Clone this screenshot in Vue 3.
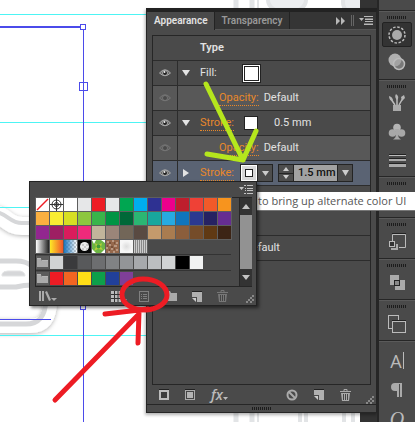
<script setup>
import { ref } from 'vue'

const weight = ref('1.5 mm')

const swatchRows = [
  ['none', 'registration', '#ffffff', '#e6e7e8', '#ed1c24', '#e6e7e8', '#00a651', '#00aeef', '#2e3192', '#ec008c', '#be1e2d', '#ef4136', '#f15a29', '#f7941e'],
  ['#fbb040', '#f9ed32', '#d7df23', '#8dc63f', '#39b54a', '#009444', '#006838', '#2bb673', '#18a79d', '#27aae1', '#1075bc', '#2b3990', '#262262', '#662d91'],
  ['#92278f', '#9e1f63', '#da1c5c', '#ee2a7b', '#c2b59b', '#9b8579', '#726658', '#594a42', '#c49a6c', '#a97c50', '#8b5e3c', '#754c29', '#603913', '#3c2415'],
  ['gray-fade', 'sun', 'sky', 'spot', 'leaf', 'bark', 'frost', 'lines']
]
const groups = [
  ['#d1d3d4', '#3a3a3c', '#58595b', '#6d6e70', '#808284', '#939598', '#a7a9ac', '#bcbec0', '#d1d3d4', '#000000', '#f1f2f2'],
  ['#ed1c24', '#f26522', '#ffde17', '#0e9f4a', '#21409a', '#7f3f98']
]
const isColor = (s) => s.startsWith('#')
</script>

<template>
  <main class="workspace">
    <svg class="artboard" width="415" height="422" viewBox="0 0 415 422" aria-hidden="true">
      <defs>
        <filter id="soft" x="-20%" y="-20%" width="140%" height="140%">
          <feDropShadow dx="0" dy="1" stdDeviation="2" flood-color="#000" flood-opacity="0.3" />
        </filter>
      </defs>
      <g fill="none" filter="url(#soft)">
        <path d="M-6 214 C6 216 8 226 22 226 H60" stroke="#fff" stroke-width="18" />
        <path d="M-6 326 H30 C44 326 50 318 50 300 V262" stroke="#fff" stroke-width="14" />
      </g>
      <g fill="none" stroke="#d6d7d9" stroke-width="4">
        <path d="M-4 212 C8 214 10 223 22 223 H40" />
        <path d="M-4 261 H16 Q26 261 32 266" stroke-width="5" />
        <path d="M-4 287 H16 Q24 285 32 285" stroke-width="5" />
        <path d="M-4 324 H26 C38 324 45 318 46 300" stroke-width="5" />
        <path d="M2 276 V274 Q3 271 8 271 H20 Q25 272 25 276Z" fill="#d6d7d9" stroke="#e3e4e5" stroke-width="1" />
      </g>
      <g fill="none" stroke="#e2e4e6">
        <path d="M236 0V422M252 0V422" stroke-width="5" />
        <path d="M258 0V422" stroke-width="2" />
        <ellipse cx="287" cy="0" rx="19" ry="13" fill="#eceef0" stroke-width="4" />
        <ellipse cx="356" cy="2" rx="13" ry="13" fill="#eceef0" stroke-width="4" />
        <path d="M272 410H300V424M306 410V424M344 410V424M353 410V424" stroke-width="4" />
      </g>
      <g stroke="#4df4f4" stroke-width="1">
        <path d="M0 14.500H146M0 122.500H146M0 207.500H30M0 335.500H146" />
      </g>
      <g stroke="#4b4bea" fill="none">
        <path d="M0 27H81" stroke-width="2" />
        <path d="M83.500 27V422M0 319.500H51" />
        <rect x="80.500" y="24.500" width="5" height="5" fill="#fff" />
        <rect x="79.500" y="82.500" width="8" height="8" />
        <rect x="80.500" y="304.500" width="5" height="5" fill="#fff" />
      </g>
    </svg>
    <div class="canvas-scroll"></div>

    <section class="panel" aria-label="Appearance panel">
      <header class="tabs">
        <button class="tab active">Appearance</button>
        <button class="tab">Transparency</button>
        <span class="tab-tools">
          <button class="bare" aria-label="Collapse"><svg width="10" height="8"><path d="M0 0L4 4L0 8ZM5 0L9 4L5 8Z" fill="#b8b8b8" /></svg></button>
          <i class="split"></i>
          <button class="bare" aria-label="Panel menu"><svg width="14" height="9"><path d="M0 2H5L2.500 5ZM5 0H14V1H5ZM6 2.500H14V4H6ZM6 5H14V6H6ZM5 7.500H14V9H5Z" fill="#b8b8b8" /></svg></button>
        </span>
      </header>

      <div class="list">
        <div class="row head"><span class="eye-cell"></span><span class="cell">Type</span></div>

        <div class="row">
          <button class="eye-cell" aria-label="Toggle fill"><svg class="eye" viewBox="0 0 12 8"><path d="M0.500 4Q6 -2.500 11.500 4Q6 9.500 0.500 4Z" fill="#6a6a6a" stroke="#aaa" /><circle cx="6" cy="4" r="2.500" fill="#222" stroke="#ccc" stroke-width=".7" /><circle cx="5.500" cy="3" r="1" fill="#eee" /></svg></button>
          <button class="twist" aria-label="Collapse fill"><svg width="8" height="6"><path d="M0 0H8L4 6Z" fill="#e4e4e4" /></svg></button>
          <span class="label">Fill:</span>
          <button class="fill-chip" aria-label="Fill color"></button>
        </div>

        <div class="row sub">
          <button class="eye-cell" aria-label="Toggle opacity"><svg class="eye dim" viewBox="0 0 12 8"><path d="M0.500 4Q6 -2.500 11.500 4Q6 9.500 0.500 4Z" fill="#6a6a6a" stroke="#aaa" /><circle cx="6" cy="4" r="2.500" fill="#333" stroke="#ccc" stroke-width=".7" /></svg></button>
          <button class="link nested">Opacity:</button><span class="value">Default</span>
        </div>

        <div class="row">
          <button class="eye-cell" aria-label="Toggle stroke"><svg class="eye" viewBox="0 0 12 8"><path d="M0.500 4Q6 -2.500 11.500 4Q6 9.500 0.500 4Z" fill="#6a6a6a" stroke="#aaa" /><circle cx="6" cy="4" r="2.500" fill="#222" stroke="#ccc" stroke-width=".7" /><circle cx="5.500" cy="3" r="1" fill="#eee" /></svg></button>
          <button class="twist" aria-label="Collapse stroke"><svg width="8" height="6"><path d="M0 0H8L4 6Z" fill="#e4e4e4" /></svg></button>
          <span class="label"><button class="link">Stroke:</button></span>
          <button class="stroke-chip" aria-label="Stroke color"></button>
          <span>0.5 mm</span>
        </div>

        <div class="row sub">
          <button class="eye-cell" aria-label="Toggle stroke opacity"><svg class="eye dim" viewBox="0 0 12 8"><path d="M0.500 4Q6 -2.500 11.500 4Q6 9.500 0.500 4Z" fill="#6a6a6a" stroke="#aaa" /><circle cx="6" cy="4" r="2.500" fill="#333" stroke="#ccc" stroke-width=".7" /></svg></button>
          <button class="link nested">Opacity:</button><span class="value">Default</span>
        </div>

        <div class="row selected">
          <button class="eye-cell" aria-label="Toggle selected stroke"><svg class="eye" viewBox="0 0 12 8"><path d="M0.500 4Q6 -2.500 11.500 4Q6 9.500 0.500 4Z" fill="#6a6a6a" stroke="#aaa" /><circle cx="6" cy="4" r="2.500" fill="#222" stroke="#ccc" stroke-width=".7" /><circle cx="5.500" cy="3" r="1" fill="#eee" /></svg></button>
          <button class="twist" aria-label="Expand stroke"><svg width="6" height="8"><path d="M0 0V8L6 4Z" fill="#e4e4e4" /></svg></button>
          <span class="label short"><button class="link">Stroke:</button></span>
          <span class="combo">
            <button class="picker" aria-label="Selected stroke color"><i></i></button>
            <button class="drop" aria-label="Open swatches"><svg width="7" height="5"><path d="M0 0H7L3.500 5Z" fill="#ccc" /></svg></button>
          </span>
          <span class="combo weight">
            <span class="steps">
              <button aria-label="Increase"><svg width="6" height="4"><path d="M0 4H6L3 0Z" fill="#ccc" /></svg></button>
              <button aria-label="Decrease"><svg width="6" height="4"><path d="M0 0H6L3 4Z" fill="#ccc" /></svg></button>
            </span>
            <input v-model="weight" aria-label="Stroke weight" />
            <button class="drop" aria-label="Weight presets"><svg width="7" height="6"><path d="M0 0H7L3.500 6Z" fill="#ccc" /></svg></button>
          </span>
        </div>

        <div class="row"><span class="eye-cell"></span></div>
        <div class="row"><span class="eye-cell"></span></div>
        <div class="row"><span class="eye-cell"></span><span class="cell"><button class="link">Opacity:</button><span class="value">Default</span></span></div>
      </div>

      <footer class="tools">
        <button class="bare" aria-label="Add new stroke"><svg width="10" height="11"><rect x="1" y="2" width="8" height="8" fill="#3c3c3c" stroke="#bcbcbc" stroke-width="2" /><path d="M0 .5H10" stroke="#222" /></svg></button>
        <button class="bare" aria-label="Add new fill"><svg width="10" height="11"><rect x=".5" y="1.500" width="9" height="9" fill="#444" stroke="#aaa" /><rect x="2" y="3" width="6" height="6" fill="#b4b4b4" /><path d="M0 .5H10" stroke="#222" /></svg></button>
        <button class="bare fx" aria-label="Add effect"><em>fx</em><svg width="5" height="6"><path d="M0 0H5L2.500 3Z" fill="#bbb" /></svg></button>
        <span class="spacer"></span>
        <button class="bare" aria-label="Clear appearance"><svg width="12" height="12"><circle cx="6" cy="6" r="4.500" fill="none" stroke="#aaa" stroke-width="2" /><path d="M3 3L9 9" stroke="#aaa" stroke-width="2" /></svg></button>
        <button class="bare" aria-label="Duplicate item"><svg width="10" height="11"><path d="M0 1H10V11H5V6H0Z" fill="#b0b0b0" /><path d="M0 7H4V11Z" fill="#ccc" /><path d="M0 .5H10" stroke="#222" /></svg></button>
        <button class="bare" aria-label="Delete item"><svg width="11" height="12"><path d="M0 2.500H11M4 2V.5H7V2" stroke="#aaa" fill="none" /><path d="M1 4H10L9 12H2Z" fill="#aaa" /><path d="M3.500 5V11M5.500 5V11M7.500 5V11" stroke="#444" /></svg></button>
        <i class="corner"></i>
      </footer>
      <div class="bottom-grip"><i class="grip"></i></div>
    </section>

    <nav class="dock" aria-label="Panels">
      <div class="group start"></div>
      <div class="group two">
        <i class="grip"></i>
        <button class="tool on" aria-label="Appearance"><svg width="20" height="20" viewBox="0 0 20 20"><circle cx="10" cy="10" r="8" fill="none" stroke="#bbb" stroke-width="1.500" stroke-dasharray="2.500 1.690" /><circle cx="10" cy="10" r="5" fill="#aaa" /></svg></button>
        <button class="tool" aria-label="Transparency"><svg width="20" height="20" viewBox="0 0 20 20"><circle cx="8" cy="8" r="6.500" fill="#b0b0b0" /><circle cx="12" cy="12" r="5.500" fill="#999" fill-opacity=".6" stroke="#bbb" stroke-width="1.500" /></svg></button>
      </div>
      <div class="group three">
        <i class="grip"></i>
        <button class="tool" aria-label="Brushes"><svg width="20" height="20" viewBox="0 0 20 20"><path d="M6 12H14V18H6Z" fill="#aaa" /><path d="M8 12L4 6M10 12V5M12 12L16 5" stroke="#bbb" stroke-width="1.500" /><path d="M2 3Q6 4 6 8Q2 8 2 3ZM9 1Q13 4 10 7Q7 4 9 1ZM14 4L17 2L18 5L15 8Z" fill="#b5b5b5" /></svg></button>
        <button class="tool" aria-label="Symbols"><svg width="20" height="20" viewBox="0 0 20 20"><circle cx="10" cy="5.500" r="3.800" fill="#b4b4b4" /><circle cx="5.500" cy="11" r="3.800" fill="#a8a8a8" /><circle cx="14.500" cy="11" r="3.800" fill="#a8a8a8" /><path d="M8 7H12L11 12Q11 16 14 17.500H6Q9 16 9 12Z" fill="#a8a8a8" /></svg></button>
        <button class="tool" aria-label="Stroke"><svg width="20" height="20" viewBox="0 0 20 20"><path d="M2 4.500H19" stroke="#bbb" /><path d="M2 9H19" stroke="#aaa" stroke-width="2" /><path d="M2 14.500H19" stroke="#aaa" stroke-width="3" /><path d="M2 3.500H19M2 7.500H19M2 12.500H19" stroke="#222" /></svg></button>
      </div>
      <div class="group one"><i class="grip"></i></div>
      <div class="group one"><i class="grip"></i>
        <button class="tool" aria-label="Transform"><svg width="20" height="20" viewBox="0 0 20 20"><path d="M5.500 9V2.500H18.500V15.500H12" fill="none" stroke="#bbb" /><path d="M5 1.500H19" stroke="#222" /><rect x="2.500" y="9.500" width="5" height="5" fill="#333" stroke="#bbb" /><path d="M9 12H11V18H4V16H9Z" fill="#aaa" /></svg></button></div>
      <div class="group one"><i class="grip"></i>
        <button class="tool" aria-label="Pathfinder"><svg width="20" height="20" viewBox="0 0 20 20"><path d="M3 2H12V7H18V17H8V12H3Z" fill="#aaa" /><rect x="7.500" y="7.500" width="5" height="5" fill="#888" stroke="#222" /></svg></button></div>
      <div class="group one"><i class="grip"></i>
        <button class="tool" aria-label="Layers"><svg width="20" height="20" viewBox="0 0 20 20"><rect x="1.500" y="1.500" width="10" height="13" fill="none" stroke="#bbb" /><rect x="5.500" y="7.500" width="13" height="11" fill="#4a4a4a" stroke="#bbb" /><path d="M5 6.500H19" stroke="#222" /></svg></button></div>
      <div class="group last"><i class="grip"></i>
        <button class="tool glyph" aria-label="Character">A<i class="caret"></i></button>
        <button class="tool" aria-label="Paragraph"><svg width="20" height="20" viewBox="0 0 20 20"><path d="M14 3H8A4 4 0 0 0 8 11H10V17H12V4H13V17H15V3Z" fill="#aaa" /></svg></button>
        <button class="tool open" aria-label="OpenType"><em>O</em></button>
      </div>
    </nav>

    <div class="tooltip" role="tooltip">to bring up alternate color UI</div>

    <section class="swatches" aria-label="Swatches">
      <header class="sw-head">
        <button class="bare" aria-label="Swatches menu"><svg width="14" height="9"><path d="M0 2H5L2.500 5ZM5 0H7V1H5ZM8 0H14V1H8ZM6 3H7V4H6ZM8 3H14V4H8ZM6 5H7V6H6ZM8 5H14V6H8ZM5 8H7V9H5ZM8 8H14V9H8Z" fill="#c4c4c4" /></svg></button>
      </header>
      <div class="sw-body">
        <div class="sw-list">
          <div v-for="(row, r) in swatchRows" :key="r" class="sw-row">
            <button v-for="(s, i) in row" :key="i" class="sw" :class="isColor(s) ? '' : s" :style="isColor(s) ? { background: s } : null" :aria-label="s">
              <svg v-if="s === 'none'" viewBox="0 0 13 13"><path d="M1 12L12 1" stroke="#ed1c24" stroke-width="1.500" /></svg>
              <svg v-else-if="s === 'registration'" viewBox="0 0 13 13"><g fill="none" stroke="#333"><circle cx="6.500" cy="6.500" r="4.500" /><circle cx="6.500" cy="6.500" r="2" /><path d="M6.500 0V13M0 6.500H13" /></g></svg>
              <svg v-else-if="s === 'spot'" viewBox="0 0 13 13"><circle cx="6.500" cy="6.500" r="4.500" fill="#eee" /><path d="M4 4H6V6H4ZM8 4H10V6H8ZM6 6H8V8H6ZM4 8H6V10H4ZM8 8H10V10H8Z" fill="#ccc" /></svg>
              <svg v-else-if="s === 'leaf'" viewBox="0 0 13 13"><path d="M0 0H4L2 4ZM9 0H13V3ZM0 9L4 13H0ZM13 9V13H9Z" fill="#fff" /><path d="M3 3L6 5L10 3L9 7L11 10L6 9L2 11L4 7Z" fill="#b4cf3a" /><circle cx="6.500" cy="6.500" r="2" fill="#3f9b3a" /></svg>
              <svg v-else-if="s === 'bark'" viewBox="0 0 13 13"><path d="M1 2H3M6 1H8M10 3H12M3 5H5M8 6H11M0 8H2M5 9H7M10 10H12M2 12H4M7 12H9" stroke="#dcc6b6" /><path d="M3 3H5M8 3H9M1 6H2M5 7H7M8 9H9M3 10H4" stroke="#5d3a28" /></svg>
            </button>
          </div>
          <div v-for="(g, n) in groups" :key="'g' + n" class="sw-row group-row">
            <button class="sw folder" aria-label="Color group"><svg viewBox="0 0 13 13"><path d="M1 3H5L6 5H12V11H1Z" fill="#aaa" /><path d="M1 2.500H5M6 4.500H12" stroke="#ddd" stroke-width=".7" /></svg></button>
            <button v-for="(s, i) in g" :key="i" class="sw" :style="{ background: s }" :aria-label="s"></button>
          </div>
        </div>
        <div class="scroll">
          <button aria-label="Scroll up"><svg width="8" height="5"><path d="M0 5H8L4 0Z" fill="#c4c4c4" /></svg></button>
          <i></i>
          <button aria-label="Scroll down"><svg width="8" height="5"><path d="M0 0H8L4 5Z" fill="#c4c4c4" /></svg></button>
        </div>
      </div>
      <footer class="sw-tools">
        <button class="bare" aria-label="Swatch libraries"><svg width="18" height="12"><path d="M0 1H2V11H0ZM3 1H5V11H3ZM6 2L8 1L12 10L10 11Z" fill="#aaa" /><path d="M12 8H18L15 11Z" fill="#aaa" /></svg></button>
        <button class="bare kinds" aria-label="Show swatch kinds"><svg width="16" height="11"><path d="M0 0H10V11H0Z" fill="#bbb" /><path d="M3.500 0V11M7 0V11M0 3.500H10M0 7.500H10" stroke="#333" /><path d="M12 8H16L14 10Z" fill="#aaa" /></svg></button>
        <button class="bare" aria-label="Swatch options"><svg width="10" height="11"><rect x=".5" y=".5" width="9" height="10" fill="none" stroke="#808080" /><path d="M2 3.500H3M4 3.500H8M2 5.500H3M4 5.500H8M2 7.500H3M4 7.500H8" stroke="#808080" /></svg></button>
        <button class="bare group-btn" aria-label="New color group"><svg width="12" height="10"><path d="M0 0H4L5 2H11V10H0Z" fill="#aaa" /></svg></button>
        <button class="bare new-btn" aria-label="New swatch"><svg width="10" height="11"><path d="M0 1H10V11H5V6H0Z" fill="#b0b0b0" /><path d="M0 7H4V11Z" fill="#ccc" /><path d="M0 .5H10" stroke="#222" /></svg></button>
        <button class="bare trash-btn" aria-label="Delete swatch"><svg width="11" height="12"><path d="M0 2.500H11M4 2V.5H7V2" stroke="#777" fill="none" /><path d="M1 4H10L9 12H2Z" fill="#777" /><path d="M3.500 5V11M5.500 5V11M7.500 5V11" stroke="#444" /></svg></button>
        <i class="corner"></i>
      </footer>
    </section>

    <svg class="marks" width="415" height="422" viewBox="0 0 415 422" aria-hidden="true">
      <g fill="none" stroke-linecap="round" stroke-linejoin="round">
        <path d="M206 84L243 160M207 154L243 160L256 131" stroke="#b5e61d" stroke-width="5" />
        <path d="M55 400L138 315M105 314L148 309M139 312L138 343" stroke="#ed1c24" stroke-width="5" />
        <path d="M122 296C121 286 132 279 143 279C156 279 167 286 167 295C167 303 158 309 146 310C134 310 123 305 122 296Z" stroke="#ed1c24" stroke-width="5" />
      </g>
    </svg>
  </main>
</template>

<style>
body { margin: 0; }
</style>

<style scoped>
* { box-sizing: border-box; }
.workspace { position: relative; height: 100vh; overflow: hidden; background: #fff; font: 11px/14px Roboto, sans-serif; color: #e2e2e2; }
button { padding: 0; border: 0; background: none; color: inherit; font: inherit; }
svg { display: block; flex: none; }
.artboard, .marks { position: absolute; left: 0; top: 0; }
.marks { pointer-events: none; }
.canvas-scroll { position: absolute; right: 38px; top: 0; bottom: 0; width: 17px; background: #333; }
.bare { display: flex; align-items: center; }
.grip { display: block; width: 20px; height: 3px; background: repeating-linear-gradient(90deg, #1c1c1c 0 1px, #4a4a4a 1px 2px); }

.panel { position: absolute; left: 146px; right: 37px; top: 8px; bottom: 9px; display: flex; flex-direction: column; background: #4a4a4a; border: 1px solid #262626; border-top: 4px solid #222; border-right-width: 2px; box-shadow: -1px 2px 3px rgba(0, 0, 0, .3); }
.tabs { display: flex; height: 18px; flex: none; background: #353535; border-bottom: 1px solid #555; }
.tab { padding: 0 6px 0 7px; border-right: 1px solid #232323; font-weight: 600; font-size: 10px; color: #989898; }
.tab.active { height: 18px; background: #4a4a4a; color: #e2e2e2; }
.tab-tools { display: flex; align-items: center; gap: 5px; margin-left: auto; padding-right: 3px; }
.split { width: 3px; height: 11px; border: solid #666; border-width: 0 1px; }
.list { flex: 1; min-height: 0; margin: 5px 5px 0; border: 1px solid #262626; }
.row { display: flex; align-items: center; height: 25px; border-bottom: 1px solid #2c2c2c; white-space: nowrap; }
.row.sub { background: #585858; }
.row.selected { background: #5a6373; }
.eye-cell { display: flex; align-items: center; justify-content: center; flex: none; width: 25px; height: 24px; border-right: 1px solid #2c2c2c; }
.head .eye-cell { border: 0; }
.eye { width: 12px; height: 8px; }
.eye.dim { opacity: .35; }
.head { font-weight: 600; }
.cell { padding-left: 22px; }
.twist { display: flex; justify-content: center; width: 16px; }
.label { width: 49px; padding-left: 6px; }
.label.short { width: 46px; }
.link { height: 15px; border-bottom: 1px dotted #e8882a; color: #e8882a; line-height: 14px; }
.nested { margin-left: 41px; }
.value { padding-left: 5px; }
.fill-chip { width: 17px; height: 17px; border: 1px solid #fff; background: #fff; outline: 1px solid #222; box-shadow: inset 0 0 0 1px #222; }
.stroke-chip { width: 14px; height: 14px; margin: 0 16px 0 1px; background: #fff; border: 1px solid #222; }
.combo { display: flex; flex: none; height: 18px; border: 1px solid #242424; }
.picker { display: flex; align-items: center; justify-content: center; width: 16px; background: #d8d8d8; border: 1px solid #fff; }
.picker i { width: 8px; height: 8px; border: 1px solid #222; background: #fff; }
.drop { display: flex; align-items: center; justify-content: center; width: 15px; background: #4d4d4d; border-left: 1px solid #242424; }
.weight { margin-left: 5px; }
.steps { display: flex; flex-direction: column; width: 15px; border-right: 1px solid #242424; }
.steps button { display: flex; flex: 1; align-items: center; justify-content: center; background: #4d4d4d; }
.steps button + button { border-top: 1px solid #242424; }
input { width: 43px; padding: 0 0 0 4px; border: 0; background: #a2a2a2; color: #111; font: inherit; font-weight: 500; }
.tools { display: flex; align-items: center; gap: 16px; height: 19px; flex: none; padding-left: 12px; }
.fx { align-items: flex-end; }
.fx em { font: italic 600 14px/16px "Open Sans", sans-serif; color: #bbb; }
.spacer { flex: 1; }
.corner { align-self: flex-end; width: 10px; height: 10px; background: repeating-conic-gradient(#888 0 25%, transparent 0 50%) 0 0 / 4px 4px; clip-path: polygon(100% 0, 100% 100%, 0 100%); }
.tools .corner { margin: 0 2px 0 -3px; }
.bottom-grip { display: flex; align-items: center; justify-content: center; flex: none; height: 8px; border-top: 1px solid #262626; }

.dock { position: absolute; right: 0; top: 0; bottom: 0; width: 38px; display: flex; flex-direction: column; background: #4a4a4a; border-left: 2px solid #262626; }
.group { display: flex; flex-direction: column; align-items: center; flex: none; height: 41px; padding-top: 4px; border-top: 1px solid #262626; box-shadow: inset 0 1px #5a5a5a; }
.group.start { height: 10px; border: 0; box-shadow: none; }
.group.two { height: 69px; }
.group.three { height: 97px; }
.group.last { flex: 1; }
.tool { display: flex; align-items: center; justify-content: center; flex: none; width: 30px; height: 29px; }
.group .grip + .tool.on { margin-top: 3px; height: 25px; }
.one .tool { height: 31px; }
.tool.on { background: #333; border: 1px solid #222; border-radius: 2px; }
.glyph { font: 18px/20px "Open Sans", sans-serif; color: #bbb; }
.caret { width: 1px; height: 17px; margin-left: 1px; background: #bbb; }
.open { font: 20px/20px "Liberation Serif", serif; color: #bbb; }
.group .grip { margin-top: 1px; }

.tooltip { position: absolute; left: 250px; right: 0; top: 192px; height: 19px; padding-left: 8px; background: #fff; border-bottom: 1px solid #777; color: #555; font: 11px/18px "Open Sans", sans-serif; white-space: nowrap; }

.swatches { position: absolute; left: 29px; top: 181px; width: 228px; background: #4a4a4a; border: 1px solid #222; box-shadow: 2px 2px 3px rgba(0, 0, 0, .5); }
.sw-head { display: flex; justify-content: flex-end; align-items: center; height: 15px; padding-right: 3px; }
.sw-body { display: flex; justify-content: space-between; margin: 0 4px 0 5px; border: solid #262626; border-width: 1px 0 1px 1px; }
.sw-row { display: flex; gap: 1px; height: 14px; padding-bottom: 1px; }
.sw-row:not(.group-row) .sw { box-shadow: 0 0 0 1px #5e5e5e; }
.group-row { height: 16px; padding: 1px 0; border-top: 1px solid #333; }
.sw { flex: none; width: 13px; height: 13px; overflow: hidden; }
.none, .registration { background: #fff; }
.gray-fade { background: linear-gradient(90deg, #fff, #222); }
.sun { background: linear-gradient(90deg, #fde926, #f0542a); }
.sky { background: linear-gradient(90deg, #1c75bc, transparent), repeating-conic-gradient(#fff 0 25%, #ccc 0 50%) 0 0 / 4px 4px; }
.spot { background: #080808; }
.leaf { background: #6cb544; }
.bark { background: #95684c; }
.frost { background: radial-gradient(#ddd, #f6f6f6 60%); }
.lines { background: repeating-linear-gradient(90deg, #ccc 0 1px, #888 1px 2px); }
.folder { background: #5c5c5c; }
.scroll { display: flex; flex-direction: column; width: 13px; background: #333; border-left: 1px solid #262626; }
.scroll button { display: flex; align-items: center; justify-content: center; height: 17px; }
.scroll i { flex: 1; background: #929292; }
.sw-tools { display: flex; align-items: center; height: 18px; padding-left: 9px; }
.kinds { margin-left: 54px; }
.kinds + .bare { margin-left: 12px; }
.group-btn { margin-left: 17px; }
.new-btn { margin-left: 14px; }
.trash-btn { margin-left: 15px; }
.sw-tools .corner { margin: 0 2px 2px auto; }
</style>
